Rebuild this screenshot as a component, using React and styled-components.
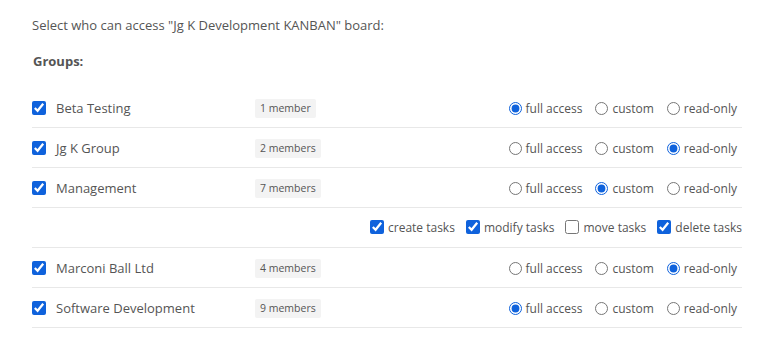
import React from "react";
import styled, { createGlobalStyle } from "styled-components";

const Global = createGlobalStyle`
  html, body { margin: 0; padding: 0; background: #fff; }
  body { font-family: "Open Sans", "Liberation Sans", sans-serif; color: #555; }
`;

const Page = styled.div`
  width: 781px;
  height: 358px;
  box-sizing: border-box;
  padding: 16px 39px 0 32px;
  overflow: hidden;
`;

const Intro = styled.p`
  margin: 0;
  font-size: 13px;
  line-height: 18px;
  color: #555;
`;

const Heading = styled.h3`
  margin: 18px 0 0 1px;
  font-size: 13px;
  line-height: 18px;
  font-weight: 700;
  color: #555;
`;

const List = styled.div`
  margin-top: 18px;
  display: flex;
  flex-direction: column;
`;

const Row = styled.div`
  display: flex;
  align-items: center;
  height: 40px;
  padding-top: 1px;
  border-bottom: 1px solid #e8e8e8;
  box-sizing: border-box;
`;

const SubRow = styled.div`
  display: flex;
  align-items: center;
  justify-content: flex-end;
  height: 40px;
  gap: 11px;
  padding-bottom: 1px;
  border-bottom: 1px solid #e8e8e8;
  box-sizing: border-box;
`;

const Check = styled.input.attrs({ type: "checkbox" })`
  margin: 0;
  width: 14px;
  height: 14px;
  accent-color: #0f62dc;
  flex: none;
`;

const Radio = styled.input.attrs({ type: "radio" })`
  margin: 0;
  width: 13px;
  height: 13px;
  accent-color: #0f62dc;
  flex: none;
`;

const Name = styled.span`
  font-size: 13px;
  margin-left: 10px;
  width: 199px;
  color: #555;
`;

const Badge = styled.span`
  background: #f3f3f3;
  color: #555;
  font-size: 10.5px;
  line-height: 19px;
  padding: 0 5px;
  border-radius: 2px;
`;

const Options = styled.div`
  margin-left: auto;
  display: flex;
  align-items: center;
  gap: 13px;
  padding-right: 5px;
`;

const Option = styled.label`
  display: flex;
  align-items: center;
  gap: 4px;
  font-size: 12px;
  color: #555;
`;

const groups = [
  { name: "Beta Testing", members: "1 member", access: "full" },
  { name: "Jg K Group", members: "2 members", access: "read" },
  { name: "Management", members: "7 members", access: "custom", perms: true },
  { name: "Marconi Ball Ltd", members: "4 members", access: "read" },
  { name: "Software Development", members: "9 members", access: "full" },
];

const perms = [
  { label: "create tasks", on: true },
  { label: "modify tasks", on: true },
  { label: "move tasks", on: false },
  { label: "delete tasks", on: true },
];

function GroupRow({ g }) {
  return (
    <>
      <Row>
        <Check defaultChecked />
        <Name>{g.name}</Name>
        <Badge>{g.members}</Badge>
        <Options>
          <Option><Radio name={g.name} defaultChecked={g.access === "full"} />full access</Option>
          <Option><Radio name={g.name} defaultChecked={g.access === "custom"} />custom</Option>
          <Option><Radio name={g.name} defaultChecked={g.access === "read"} />read-only</Option>
        </Options>
      </Row>
      {g.perms && (
        <SubRow>
          {perms.map((p) => (
            <Option key={p.label}>
              <Check defaultChecked={p.on} />
              {p.label}
            </Option>
          ))}
        </SubRow>
      )}
    </>
  );
}

export default function App() {
  return (
    <Page>
      <Global />
      <Intro>Select who can access "Jg K Development KANBAN" board:</Intro>
      <Heading>Groups:</Heading>
      <List>
        {groups.map((g) => (
          <GroupRow key={g.name} g={g} />
        ))}
      </List>
    </Page>
  );
}
